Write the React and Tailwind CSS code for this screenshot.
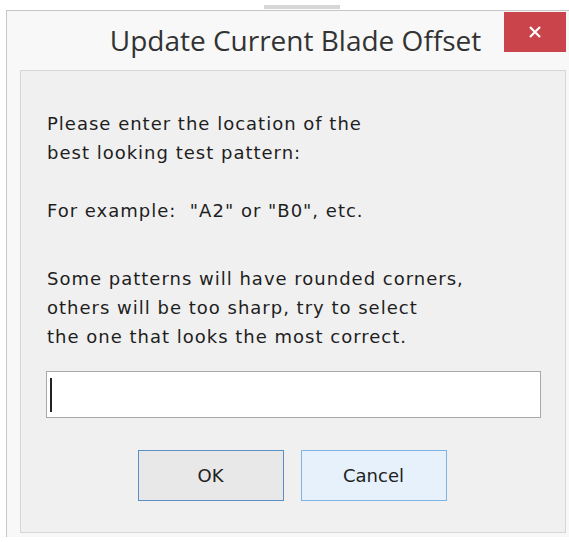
export default function App() {
  const body = { fontFamily: '"DejaVu Sans", Tahoma, sans-serif' }

  return (
    <div className="relative h-[542px] w-[569px] overflow-hidden bg-white">
      {/* window behind the dialog */}
      <div className="absolute left-[264px] top-[5px] h-[4px] w-[76px] bg-[#d6d6d6]" />

      <div className="ml-[6px] mt-[10px] h-[527px] w-[563px] border-l border-t border-[#c6c6c6] bg-[#f8f8f8]">
        {/* title bar */}
        <div className="flex h-[59px] items-start">
          <div
            className="flex-1 pl-[80px] pt-[12px] text-center text-[28px] leading-[34px] text-[#333]"
            style={{ fontFamily: '"Open Sans", "Noto Sans", sans-serif' }}
          >
            Update Current Blade Offset
          </div>
          <button
            type="button"
            className="mr-[3px] mt-[1px] flex h-[40px] w-[62px] items-center justify-center bg-[#c9454b] text-white"
            aria-label="Close"
          >
            <svg width="14" height="14" viewBox="0 0 14 14" fill="none" stroke="white" strokeWidth="2.2">
              <path d="M2 2 L12 12 M12 2 L2 12" />
            </svg>
          </button>
        </div>

        {/* client area */}
        <div
          className="ml-[13px] h-[463px] w-[546px] border border-[#d6d6d6] bg-[#f0f0f0] pl-[26px] pr-[4px] pt-[38px] text-[18px] leading-[29px] tracking-[1px] text-[#1e1e1e]"
          style={body}
        >
          <p>Please enter the location of the</p>
          <p>best looking test pattern:</p>
          <p className="mt-[29px]">For example:&nbsp; "A2" or "B0", etc.</p>
          <p className="mt-[39px]">Some patterns will have rounded corners,</p>
          <p>others will be too sharp, try to select</p>
          <p>the one that looks the most correct.</p>

          <div className="-ml-px mt-[20px] flex h-[47px] w-[495px] items-center border border-[#a9a9a9] bg-white pl-[3px]">
            <div className="h-[34px] w-[2px] bg-[#222]" />
          </div>

          <div className="-ml-[26px] mt-[32px] flex justify-center gap-[17px] pl-[2px] tracking-normal">
            <button
              type="button"
              className="h-[51px] w-[146px] border border-[#5a8fc6] bg-[#e8e8e8] text-[18px] text-[#222]"
              style={body}
            >
              OK
            </button>
            <button
              type="button"
              className="h-[51px] w-[146px] border border-[#7fb3e6] bg-[#e6f1fb] text-[18px] text-[#222]"
              style={body}
            >
              Cancel
            </button>
          </div>
        </div>
      </div>
    </div>
  )
}
